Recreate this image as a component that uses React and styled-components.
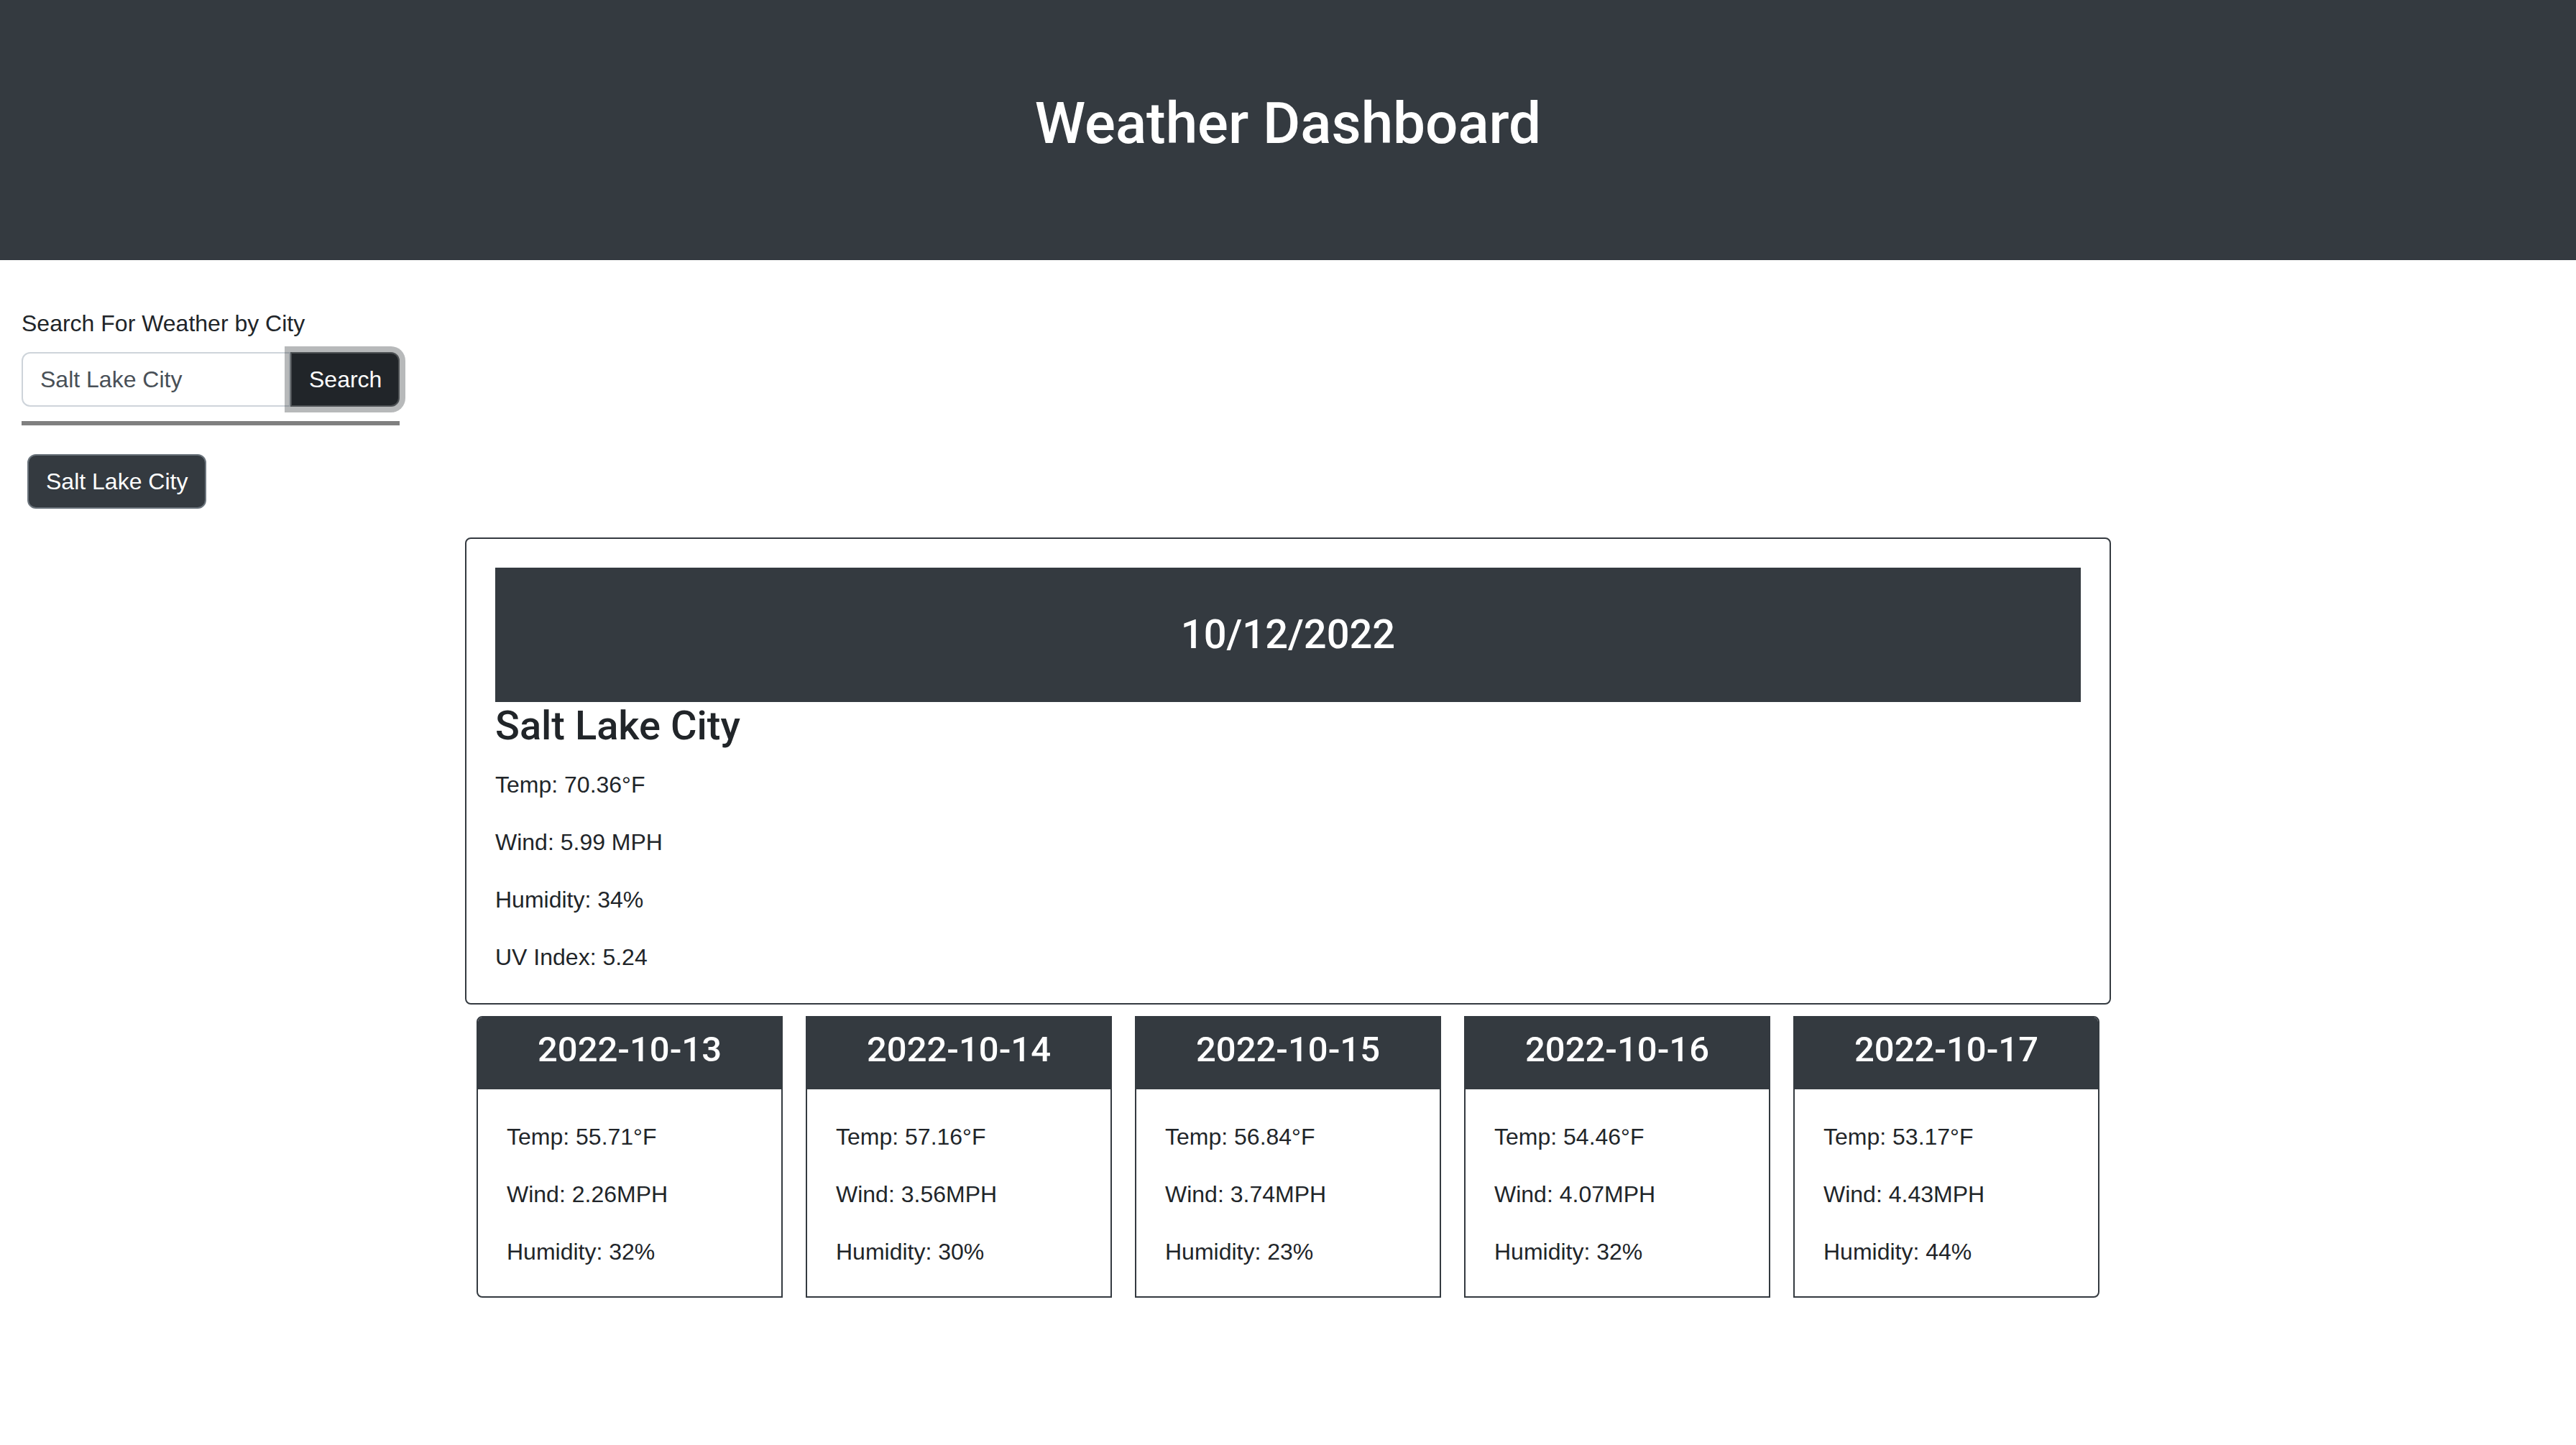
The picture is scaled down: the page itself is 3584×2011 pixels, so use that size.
import React from "react";
import styled, { createGlobalStyle } from "styled-components";

const GlobalStyle = createGlobalStyle`
  body {
    margin: 0;
    background: #fff;
  }
`;

const headingFont = `Roboto, "Liberation Sans", Arial, sans-serif`;

// the reference is a 1792px-wide bootstrap page shot at 2x
const Page = styled.div`
  zoom: 2;
  font-family: "Liberation Sans", Arial, sans-serif;
  font-size: 16px;
  line-height: 24px;
  color: #212529;
  min-height: 1005px;
`;

const Header = styled.header`
  background-color: #343a40;
  color: #fff;
  text-align: center;
  padding: 62px 0 63px;
`;

const Title = styled.h1`
  margin: 0 0 8px;
  font-family: ${headingFont};
  font-size: 40px;
  font-weight: 500;
  line-height: 1.2;
`;

const Aside = styled.aside`
  width: fit-content;
  padding: 32px 0 0 15px;
`;

const Label = styled.label`
  display: block;
  margin-bottom: 8px;
`;

const InputGroup = styled.div`
  display: flex;
`;

const Input = styled.input`
  box-sizing: border-box;
  width: 187px;
  height: 38px;
  padding: 6px 12px;
  border: 1px solid #ced4da;
  border-radius: 6px 0 0 6px;
  font: inherit;
  color: #495057;
  outline: none;
`;

const SearchButton = styled.button`
  box-sizing: border-box;
  width: 76px;
  height: 38px;
  padding: 6px 12px;
  border: 1px solid #4d5154;
  border-radius: 0 6px 6px 0;
  background: #212529;
  color: #fff;
  font: inherit;
  box-shadow: 0 0 0 4px rgba(66, 70, 73, 0.38);
  position: relative;
`;

const Rule = styled.div`
  height: 3px;
  margin-top: 10px;
  background: #808080;
`;

const History = styled.div`
  display: flex;
  flex-direction: column;
  align-items: flex-start;
  margin: 20px 0 0 4px;
`;

const CityButton = styled.button`
  box-sizing: border-box;
  height: 38px;
  padding: 6px 12px;
  border: 1px solid #6c757d;
  border-radius: 6px;
  background: #343a40;
  color: #fff;
  font: inherit;
`;

const Main = styled.main`
  width: 1145px;
  margin: 20px auto 0;
`;

const TodayCard = styled.section`
  border: 1px solid #343a40;
  border-radius: 4px;
  padding: 20px;
`;

const DateBar = styled.h3`
  margin: 0;
  padding: 30px 0;
  background: #343a40;
  color: #fff;
  text-align: center;
  font-family: ${headingFont};
  font-size: 28px;
  font-weight: 500;
  line-height: 1.2;
`;

const CityName = styled.h3`
  margin: 0 0 12px;
  font-family: ${headingFont};
  font-size: 28px;
  font-weight: 500;
  line-height: 1.2;
`;

const Stats = styled.div`
  display: flex;
  flex-direction: column;
  gap: 16px;
`;

const Stat = styled.p`
  margin: 0;
`;

const Forecast = styled.div`
  display: flex;
  margin-top: 8px;
`;

const DayCard = styled.div`
  flex: 1;
  margin: 0 8px;
  border: 1px solid #343a40;
  overflow: hidden;

  &:first-child {
    border-radius: 4px 0 0 4px;
  }
  &:last-child {
    border-radius: 0 4px 4px 0;
  }
`;

const DayHeader = styled.h4`
  margin: 0;
  padding: 8px 16px 13px;
  background: #343a40;
  color: #fff;
  text-align: center;
  font-family: ${headingFont};
  font-size: 24.5px;
  font-weight: 500;
  line-height: 29px;
`;

const DayBody = styled.div`
  padding: 21px 20px 19px;
`;

const today = {
  date: "10/12/2022",
  city: "Salt Lake City",
  stats: ["Temp: 70.36°F", "Wind: 5.99 MPH", "Humidity: 34%", "UV Index: 5.24"],
};

const days = [
  { date: "2022-10-13", temp: "55.71", wind: "2.26", humidity: "32" },
  { date: "2022-10-14", temp: "57.16", wind: "3.56", humidity: "30" },
  { date: "2022-10-15", temp: "56.84", wind: "3.74", humidity: "23" },
  { date: "2022-10-16", temp: "54.46", wind: "4.07", humidity: "32" },
  { date: "2022-10-17", temp: "53.17", wind: "4.43", humidity: "44" },
];

export default function App() {
  return (
    <Page>
      <GlobalStyle />
      <Header>
        <Title>Weather Dashboard</Title>
      </Header>

      <Aside>
        <Label htmlFor="city">Search For Weather by City</Label>
        <InputGroup>
          <Input id="city" defaultValue="Salt Lake City" />
          <SearchButton>Search</SearchButton>
        </InputGroup>
        <Rule />
        <History>
          <CityButton>Salt Lake City</CityButton>
        </History>
      </Aside>

      <Main>
        <TodayCard>
          <DateBar>{today.date}</DateBar>
          <CityName>{today.city}</CityName>
          <Stats>
            {today.stats.map((s) => (
              <Stat key={s}>{s}</Stat>
            ))}
          </Stats>
        </TodayCard>

        <Forecast>
          {days.map((d) => (
            <DayCard key={d.date}>
              <DayHeader>{d.date}</DayHeader>
              <DayBody>
                <Stats>
                  <Stat>Temp: {d.temp}°F</Stat>
                  <Stat>Wind: {d.wind}MPH</Stat>
                  <Stat>Humidity: {d.humidity}%</Stat>
                </Stats>
              </DayBody>
            </DayCard>
          ))}
        </Forecast>
      </Main>
    </Page>
  );
}
